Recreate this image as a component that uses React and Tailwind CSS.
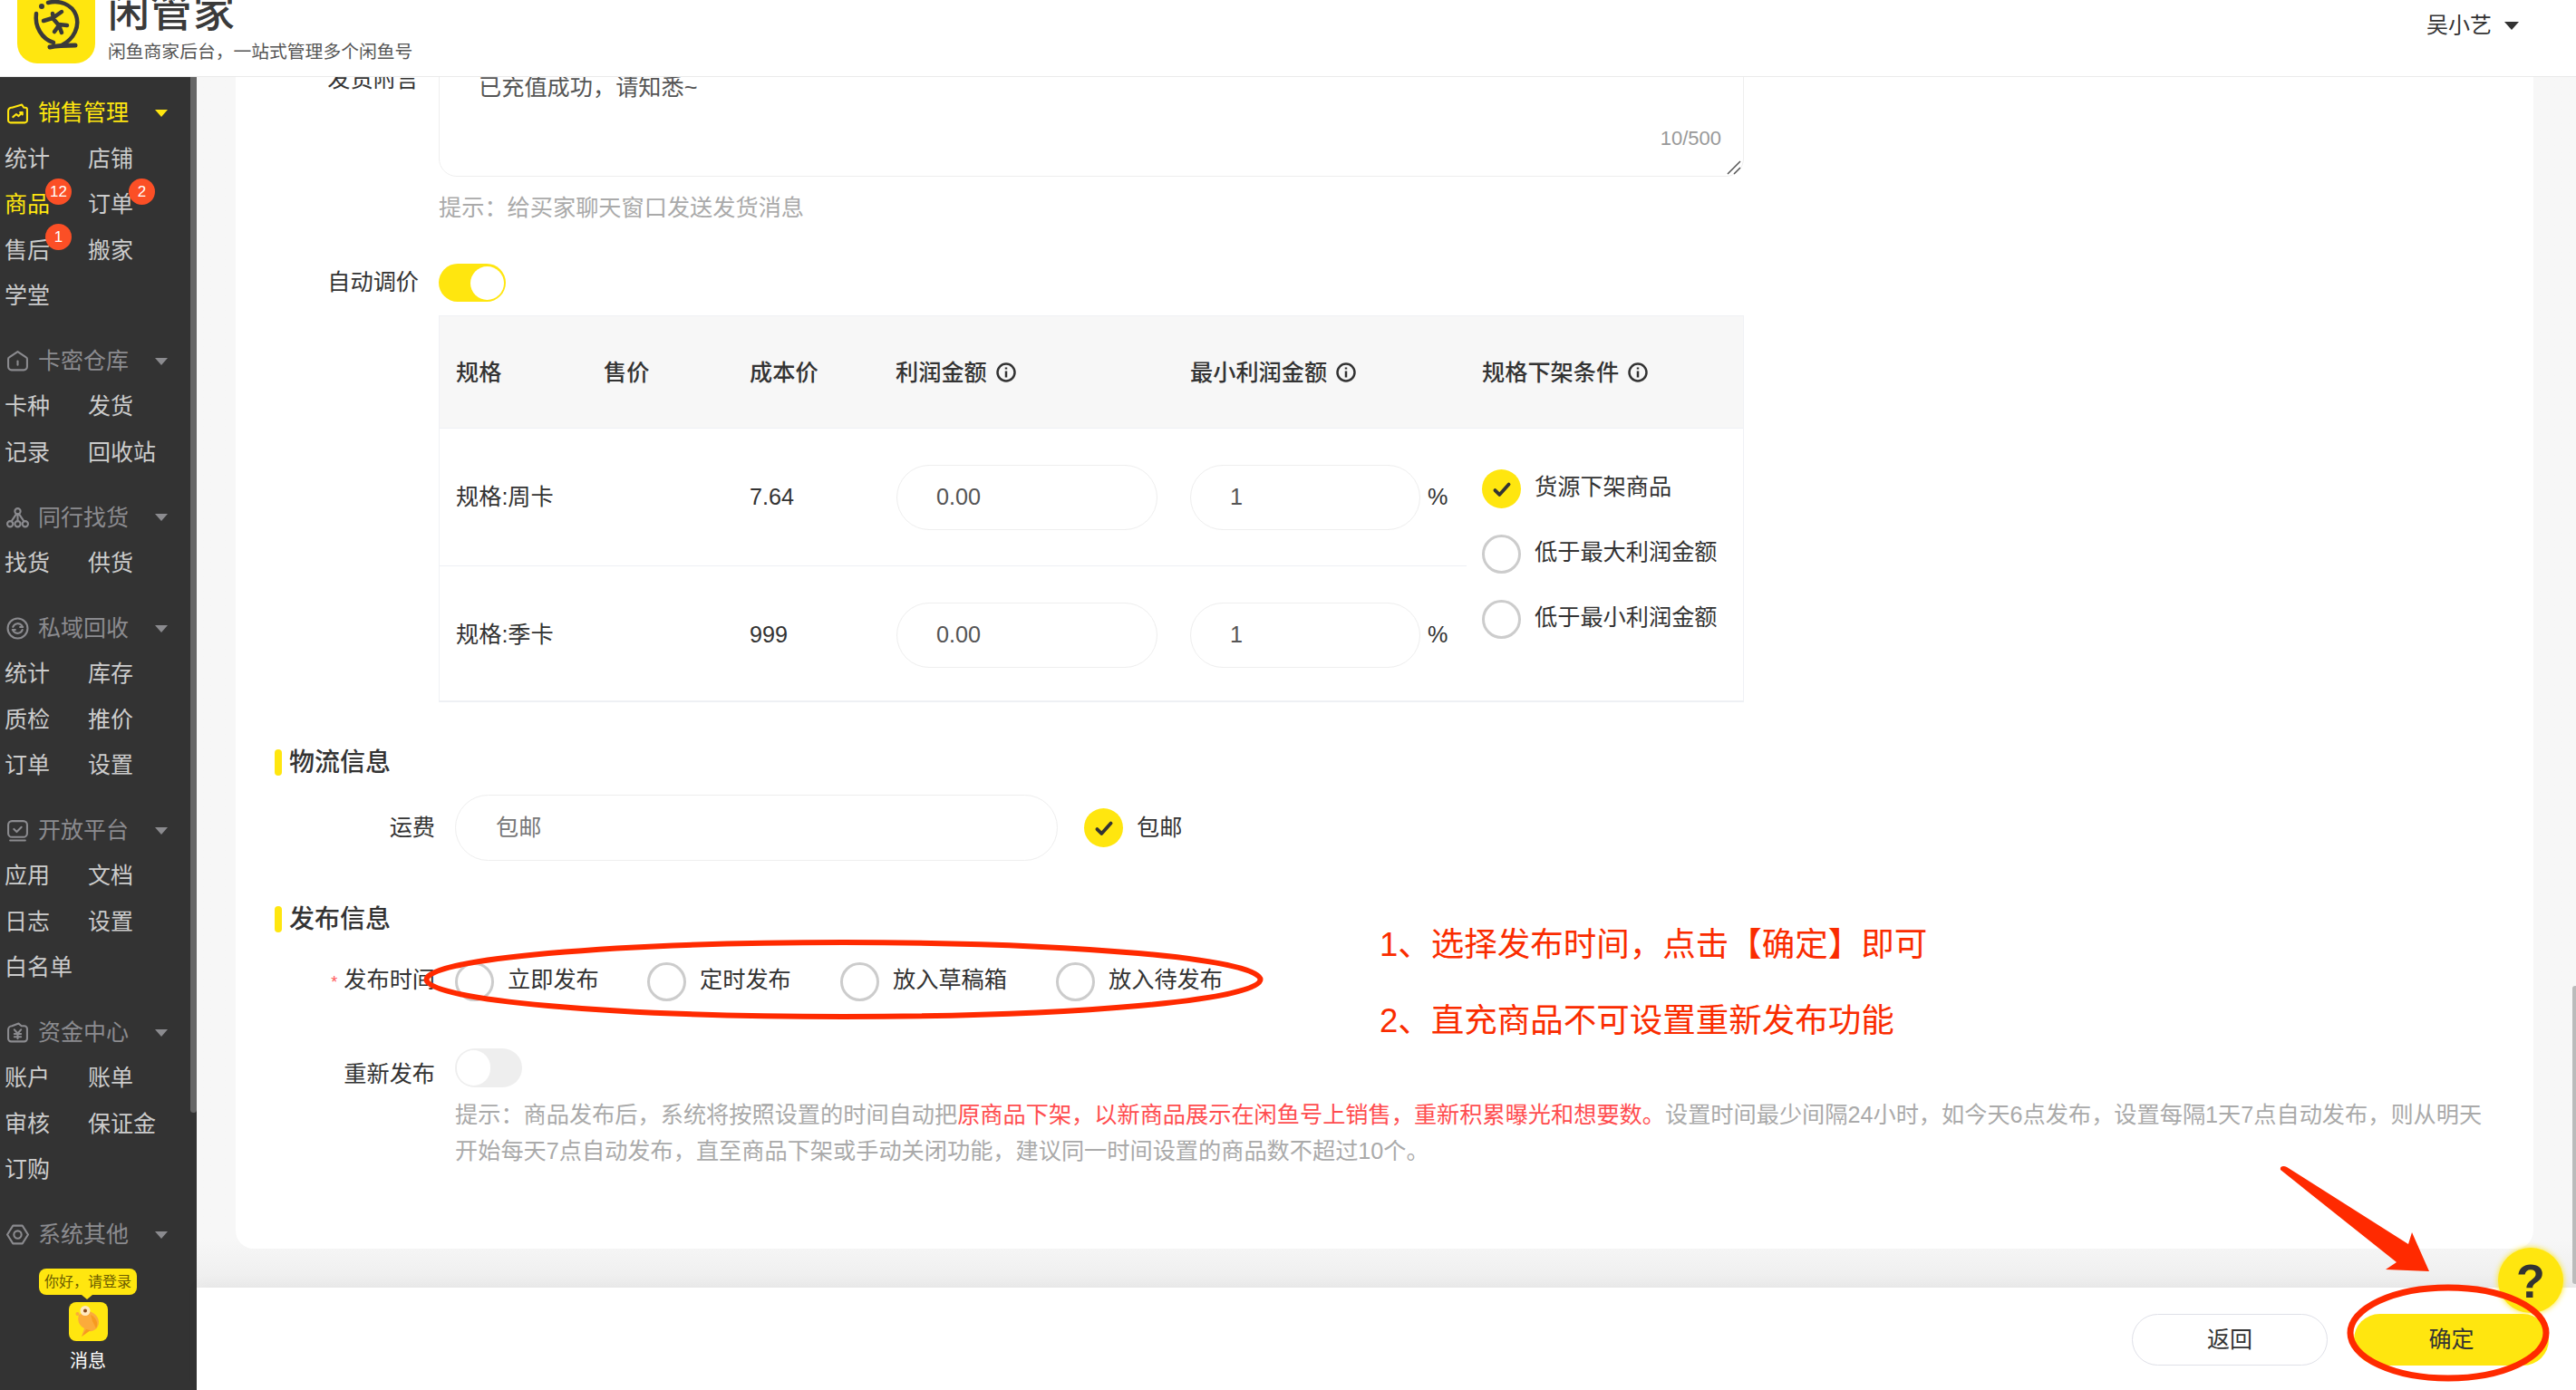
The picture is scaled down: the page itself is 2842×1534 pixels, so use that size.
const Y = "#ffe60f";

const icons = {
  sale: (
    <>
      <path d="M6 5.500 16.500 2.500 18.500 5.500H20a2 2 0 0 1 2 2V19a2.500 2.500 0 0 1-2.500 2.500h-15A2.500 2.500 0 0 1 2 19V9a3.500 3.500 0 0 1 4-3.500Z" />
      <path d="M7 15.500l3.500-3 2.500 2 4-4M14.500 10.500H17V13" />
    </>
  ),
  card: (
    <>
      <path d="M12 2 21 8a2 2 0 0 1 1 2v8a3.500 3.500 0 0 1-3.500 3.500h-13A3.500 3.500 0 0 1 2 18v-8a2 2 0 0 1 1-2Z" />
      <path d="M12 12v4" />
    </>
  ),
  net: (
    <>
      <circle cx="12" cy="5" r="3" />
      <circle cx="4" cy="18.500" r="3" />
      <circle cx="12" cy="18.500" r="3" />
      <circle cx="20" cy="18.500" r="3" />
      <path d="M12 8v7.500M10.500 8 5.500 15.500M13.500 8l5 7.500" />
    </>
  ),
  recycle: (
    <>
      <circle cx="12" cy="12" r="10.500" />
      <path d="M7 10.500A5.500 5.500 0 0 1 16.500 9L17 10.500M17 13.500A5.500 5.500 0 0 1 7.500 15L7 13.500" />
      <path d="M14.500 10.500H17.500M6.500 13.500H9.500" />
    </>
  ),
  open: (
    <>
      <rect x="2" y="2" width="20" height="17" rx="4" />
      <path d="M8 10.500l3 3 5-5M4 22.500h16" />
    </>
  ),
  money: (
    <>
      <path d="M6 5 13 2.500 16 5h3a3 3 0 0 1 3 3v10.500a3 3 0 0 1-3 3H5a3 3 0 0 1-3-3V9a4 4 0 0 1 4-4Z" />
      <path d="M8.500 9l3.500 4 3.500-4M8.500 13.500h7M8.500 16.500h7M12 13v5.500" />
    </>
  ),
  system: (
    <>
      <path d="M7 2.500h10L23 12l-6 9.500H7L1 12Z" strokeLinejoin="round" />
      <circle cx="12" cy="12" r="4" />
    </>
  ),
};

const Icon = ({ name, color }) => (
  <svg viewBox="0 0 24 24" className="w-[25px] h-[25px] shrink-0" fill="none" stroke={color} strokeWidth="2" strokeLinecap="round" strokeLinejoin="round">
    {icons[name]}
  </svg>
);

const groups = [
  { title: "销售管理", icon: "sale", active: true, items: ["统计", "店铺", "商品", "订单", "售后", "搬家", "学堂"] },
  { title: "卡密仓库", icon: "card", items: ["卡种", "发货", "记录", "回收站"] },
  { title: "同行找货", icon: "net", items: ["找货", "供货"] },
  { title: "私域回收", icon: "recycle", items: ["统计", "库存", "质检", "推价", "订单", "设置"] },
  { title: "开放平台", icon: "open", items: ["应用", "文档", "日志", "设置", "白名单"] },
  { title: "资金中心", icon: "money", items: ["账户", "账单", "审核", "保证金", "订购"] },
  { title: "系统其他", icon: "system", items: [] },
];

const badges = { 商品: "12", 订单: "2", 售后: "1" };

const Radio = ({ checked }) =>
  checked ? (
    <span className="w-[43px] h-[43px] rounded-full bg-[#ffe60f] flex items-center justify-center shrink-0">
      <svg viewBox="0 0 24 24" className="w-[26px] h-[26px]" fill="none" stroke="#333" strokeWidth="3.500" strokeLinecap="round" strokeLinejoin="round">
        <path d="M5 13l4.500 4.500L19 7" />
      </svg>
    </span>
  ) : (
    <span className="w-[43px] h-[43px] rounded-full border-[3px] border-[#ccc] bg-white shrink-0"></span>
  );

const Info = () => (
  <svg viewBox="0 0 22 22" className="w-[22px] h-[22px] shrink-0" fill="none" stroke="#333" strokeWidth="2.500">
    <circle cx="11" cy="11" r="9.500" />
    <path d="M11 5.500v2M11 9.500v7" />
  </svg>
);

const Section = ({ title, className }) => (
  <div className={`flex items-center h-[29px] ml-[43px] ${className}`}>
    <span className="w-[8px] h-[29px] rounded-full bg-[#ffe60f]"></span>
    <span className="ml-[8px] text-[28px] font-medium text-[#333]">{title}</span>
  </div>
);

const TableRow = ({ name, cost, last }) => (
  <div className={`flex items-center pl-[18px] ${last ? "h-[151px]" : "h-[152px] border-b border-[#eef0f4]"}`}>
    <span className="w-[163px]">{name}</span>
    <span className="w-[161px]"></span>
    <span className="w-[162px]">{cost}</span>
    <span className="w-[324px]">
      <span className="flex items-center pl-[43px] w-[288px] h-[72px] rounded-full border border-[#eee] text-[#555]">0.00</span>
    </span>
    <span className="flex items-center pl-[43px] w-[254px] h-[72px] rounded-full border border-[#eee] text-[#555]">1</span>
    <span className="ml-[8px]">%</span>
  </div>
);

const Footer = () => (
  <div className="h-[113px] bg-white flex justify-end items-start pt-[29px] pr-[30px] gap-[29px] shadow-[0_-4px_14px_rgba(0,0,0,0.03)]">
    <button className="w-[216px] h-[57px] rounded-full border border-[#dfe0e8] text-[25px] text-[#333]">返回</button>
    <button className="w-[215px] h-[57px] rounded-full bg-[#ffe60f] text-[25px] text-[#333]">确定</button>
  </div>
);

const App = () => {
  return (
    <div className="relative w-[2842px] h-[1534px] overflow-hidden bg-white text-[#333] text-[25.200px] [font-family:'Liberation_Sans','Noto_Sans_CJK_SC',sans-serif]">
      {/* top bar */}
      <header className="h-[85px] flex items-start justify-between border-b border-[#eaeaea] overflow-hidden">
        <div className="flex items-start pl-[19px]">
          <div className="w-[86px] h-[70px] rounded-b-[22px] bg-[#ffe60f]">
            <svg viewBox="0 0 86 70" className="w-[86px] h-[70px]" fill="none" stroke="#3a3a3a" strokeLinecap="round" strokeLinejoin="round">
              <path d="M34 3C46 0 60 4 65 17C69 29 63 43 49 50" strokeWidth="4.500" />
              <path d="M21 15C19 29 27 43 40 47" strokeWidth="4.500" />
              <circle cx="27" cy="7" r="3" fill="#3a3a3a" stroke="none" />
              <path d="M36 52C46 50 54 50 64 50" strokeWidth="5" />
              <path d="M29 23 39 20 49 13M39 15 40 21 46 28M46 28 41 35M46 28 49 36M46 27 55 28" strokeWidth="4.500" />
            </svg>
          </div>
          <div className="ml-[14px]">
            <div className="mt-[-14px] h-[55px] text-[46px] leading-[55px] font-medium text-[#3a3a3a] tracking-[1px]">闲管家</div>
            <div className="mt-[2px] text-[19.800px] leading-[28px] text-[#555]">闲鱼商家后台，一站式管理多个闲鱼号</div>
          </div>
        </div>
        <div className="flex items-center pt-[10px] pr-[63px]">
          <span className="text-[24px] leading-[36px] text-[#333]">吴小艺</span>
          <span className="ml-[14px] w-0 h-0 border-x-[8px] border-x-transparent border-t-[9px] border-t-[#333]"></span>
        </div>
      </header>

      <div className="flex h-[1449px]">
        {/* sidebar */}
        <aside className="relative w-[217px] shrink-0 bg-[#333333] flex flex-col text-[25px]">
          <div className="h-[1143px] absolute top-0 right-0 w-[7px] rounded-b-[4px] bg-[#666666]"></div>
          <div className="flex-1 overflow-hidden pt-[15px]">
            {groups.map((group) => (
              <div key={group.title} className="mb-[21.500px]">
                <div className={`flex items-center h-[50.400px] pl-[7px] ${group.active ? "text-[#ffe60f]" : "text-[#8b8b8f]"}`}>
                  <Icon name={group.icon} color={group.active ? Y : "#8b8b8f"} />
                  <span className="ml-[10px] w-[129px]">{group.title}</span>
                  <span className={`w-0 h-0 border-x-[7px] border-x-transparent border-t-[8px] ${group.active ? "border-t-[#ffe60f]" : "border-t-[#8b8b8f]"}`}></span>
                </div>
                <div className="grid grid-cols-[92px_1fr] pl-[5px] text-[#cccccc]">
                  {group.items.map((item, i) => (
                    <div key={i} className={`relative h-[50.400px] flex items-center ${group.active && item === "商品" ? "text-[#ffe60f]" : ""}`}>
                      {item}
                      {group.active && badges[item] && (
                        <span className="absolute left-[45px] top-[-4px] w-[29px] h-[29px] rounded-full bg-[#fb4f26] text-white text-[17px] flex items-center justify-center">
                          {badges[item]}
                        </span>
                      )}
                    </div>
                  ))}
                </div>
              </div>
            ))}
          </div>
          <div className="h-[136px] shrink-0 flex flex-col items-center pr-[23px] pt-[2px]">
            <div className="relative h-[29px] w-[108px] rounded-[8px] bg-[#ffe60f] text-[#6b5c00] text-[16px] flex items-center justify-center">
              你好，请登录
              <span className="absolute left-[47px] top-[29px] w-0 h-0 border-x-[6px] border-x-transparent border-t-[5px] border-t-[#ffe60f]"></span>
            </div>
            <div className="mt-[8px] w-[43px] h-[43px] rounded-[8px] bg-[#ffe60f]">
              <svg viewBox="0 0 43 43" className="w-[43px] h-[43px]">
                <path d="M20 10C27 10 33 16 33 22C33 29 27 33 22 32L14 38L17 29C11 26 9 20 11 14Z" fill="#fbab3b" />
                <path d="M24 14C30 17 33 23 30 29L26 21Z" fill="#f79a1f" />
                <path d="M19 30L24 31 14 38Z" fill="#f79a1f" />
                <circle cx="9.500" cy="13" r="2" fill="#fbab3b" />
                <circle cx="18" cy="9.500" r="5.500" fill="#ffe9c0" />
                <circle cx="18" cy="9.500" r="2" fill="#8a4a18" />
              </svg>
            </div>
            <div className="mt-[8px] text-[20px] leading-[28px] text-white">消息</div>
          </div>
        </aside>

        {/* page */}
        <main className="relative flex-1 min-w-0 flex flex-col bg-[#f7f7f7]">
          <div className="h-[1336px] overflow-hidden pl-[43px] pr-[47px] bg-gradient-to-b from-[#f7f7f7] from-[96%] to-[#ededed]">
            <div className="h-[1293px] bg-white rounded-b-[20px] overflow-hidden relative">
              <div className="mt-[-40px] text-[#333]">
                <div className="flex items-start">
                  <div className="w-[202px] text-right pt-[27px] leading-[30px]">发货附言</div>
                  <div className="relative ml-[22px] w-[1440px] h-[150px] rounded-[20px] border border-[#eee] pl-[43px] pt-[34px] leading-[32px] text-[#555]">
                    已充值成功，请知悉~
                    <span className="absolute right-[24px] bottom-[28px] text-[22px] leading-[26px] text-[#999]">10/500</span>
                    <svg viewBox="0 0 16 16" className="absolute right-[2px] bottom-[1px] w-[16px] h-[16px]" fill="none" stroke="#555" strokeWidth="1.500">
                      <path d="M1 15 15 1M8 15l7-7" />
                    </svg>
                  </div>
                </div>
                <div className="ml-[224px] mt-[19px] leading-[30px] text-[#aaa]">提示：给买家聊天窗口发送发货消息</div>
                <div className="flex items-center mt-[47px]">
                  <div className="w-[202px] text-right">自动调价</div>
                  <div className="ml-[22px] w-[74px] h-[42px] rounded-full bg-[#ffe60f] flex justify-end items-center pr-[2px]">
                    <span className="w-[37px] h-[37px] rounded-full bg-white"></span>
                  </div>
                </div>

                {/* spec table */}
                <div className="ml-[224px] mt-[15px] w-[1440px] h-[427px] border border-[#f0f1f5] border-b-2 border-b-[#eef0f4]">
                  <div className="flex items-center h-[124px] pl-[18px] pt-[2px] bg-[#f7f7f7] border-b border-[#eef0f4] font-medium">
                    <span className="w-[163px]">规格</span>
                    <span className="w-[161px]">售价</span>
                    <span className="w-[161px]">成本价</span>
                    <span className="w-[325px] flex items-center gap-[10px]">利润金额<Info /></span>
                    <span className="w-[322px] flex items-center gap-[10px]">最小利润金额<Info /></span>
                    <span className="flex items-center gap-[10px]">规格下架条件<Info /></span>
                  </div>
                  <div className="flex">
                    <div className="w-[1133px]">
                      <TableRow name="规格:周卡" cost="7.64" />
                      <TableRow name="规格:季卡" cost="999" last />
                    </div>
                    <div className="ml-[17px] pt-[45px] flex flex-col gap-[29px]">
                      {["货源下架商品", "低于最大利润金额", "低于最小利润金额"].map((label, i) => (
                        <div key={label} className="flex items-center gap-[15px] whitespace-nowrap">
                          <Radio checked={i === 0} />
                          <span className="mt-[-3px]">{label}</span>
                        </div>
                      ))}
                    </div>
                  </div>
                </div>

                <Section title="物流信息" className="mt-[52px]" />
                <div className="flex items-center mt-[21px]">
                  <div className="w-[220px] text-right">运费</div>
                  <div className="ml-[22px] w-[665px] h-[73px] rounded-full border border-[#eee] flex items-center pl-[44px] text-[#777]">包邮</div>
                  <div className="ml-[29px]"><Radio checked /></div>
                  <span className="ml-[15px]">包邮</span>
                </div>

                <Section title="发布信息" className="mt-[50px]" />
                <div className="flex items-center mt-[32px] h-[44px]">
                  <div className="w-[220px] text-right mt-[-3px]"><span className="text-[#ff5a5a] text-[18px] mr-[7px]">*</span>发布时间</div>
                  <div className="ml-[22px] flex items-center">
                    {[
                      ["立即发布", "w-[212px]"],
                      ["定时发布", "w-[213px]"],
                      ["放入草稿箱", "w-[238px]"],
                      ["放入待发布", ""],
                    ].map(([label, width]) => (
                      <div key={label} className={`flex items-center gap-[15px] ${width}`}>
                        <Radio />
                        <span className="mt-[-3px]">{label}</span>
                      </div>
                    ))}
                  </div>
                </div>
                <div className="flex items-start mt-[52px]">
                  <div className="w-[220px] text-right pt-[12px] leading-[32px]">重新发布</div>
                  <div className="ml-[22px] w-[74px] h-[43px] rounded-full bg-[#eeeeee] flex items-center pl-[2px]">
                    <span className="w-[37px] h-[39px] rounded-full bg-white"></span>
                  </div>
                </div>
                <div className="ml-[242px] mt-[9px] leading-[40px] text-[#aaa] whitespace-nowrap">
                  <div>提示：商品发布后，系统将按照设置的时间自动把<span className="text-[#ff4d4f]">原商品下架，以新商品展示在闲鱼号上销售，重新积累曝光和想要数。</span>设置时间最少间隔24小时，如今天6点发布，设置每隔1天7点自动发布，则从明天</div>
                  <div>开始每天7点自动发布，直至商品下架或手动关闭功能，建议同一时间设置的商品数不超过10个。</div>
                </div>
              </div>
            </div>
          </div>
          <Footer />
          <div className="absolute right-0 top-[1003px] w-[4px] h-[329px] rounded-l-[3px] bg-[#bbbbbb]"></div>
        </main>
      </div>

      {/* red annotations over the page */}
      <div className="absolute left-[1522px] top-[1021px] text-[36.500px] leading-[44px] text-[#fa2c00] whitespace-nowrap">1、选择发布时间，点击【确定】即可</div>
      <div className="absolute left-[1522px] top-[1105px] text-[36.500px] leading-[44px] text-[#fa2c00] whitespace-nowrap">2、直充商品不可设置重新发布功能</div>
      <svg viewBox="0 0 2842 1534" className="absolute inset-0 w-[2842px] h-[1534px] pointer-events-none" fill="none">
        <ellipse cx="930.500" cy="1081" rx="460" ry="41" stroke="#ff2a00" strokeWidth="6" />
        <path d="M2516 1291C2515 1287 2519 1286 2523 1288L2657 1373L2661 1360L2680 1403L2632 1401L2644 1393Z" fill="#ff2a00" />
        <circle cx="2792" cy="1413" r="36" fill="#ffe60f" className="drop-shadow-[0_0_3px_#ffe60f]" />
        <text x="2792" y="1432" textAnchor="middle" fontSize="52" fontWeight="700" fill="#333" fontFamily="Liberation Sans">?</text>
        <ellipse cx="2701" cy="1471" rx="108" ry="50" stroke="#ff2a00" strokeWidth="7" />
      </svg>
    </div>
  );
};

export default App;
